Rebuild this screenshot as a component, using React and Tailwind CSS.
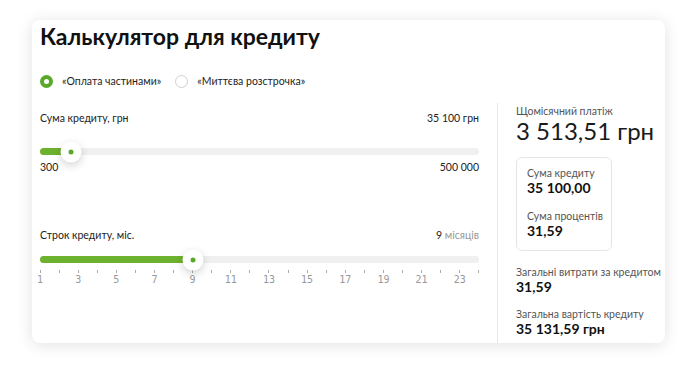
import React from "react";

const font = { fontFamily: "Lato, 'Noto Sans', sans-serif" };

function Radio({ checked, label }) {
  return (
    <div className="flex items-center">
      {checked ? (
        <span className="flex h-[13px] w-[13px] items-center justify-center rounded-full bg-[#5aa82a]">
          <span className="h-[5px] w-[5px] rounded-full bg-white"></span>
        </span>
      ) : (
        <span className="h-[13px] w-[13px] rounded-full border border-[#d0d0d0] bg-white"></span>
      )}
      <span className="ml-[9px] text-[10.5px] leading-[14px] text-[#1d1d1d]">{label}</span>
    </div>
  );
}

function Slider({ percent }) {
  return (
    <div className="relative h-[7px] w-full rounded-full bg-[#f0f0f0]">
      <div className="h-[7px] rounded-full bg-[#6db22e]" style={{ width: percent + "%" }}></div>
      <div
        className="absolute top-1/2 flex h-[21px] w-[21px] -translate-x-1/2 -translate-y-1/2 items-center justify-center rounded-full bg-white shadow-[0_3px_8px_rgba(0,0,0,0.18)]"
        style={{ left: percent + "%" }}
      >
        <span className="h-[5px] w-[5px] rounded-full bg-[#5aa82a]"></span>
      </div>
    </div>
  );
}

export default function App() {
  const months = Array.from({ length: 24 }, (_, i) => i + 1);
  const sumPercent = ((35100 - 300) / (500000 - 300)) * 100;
  const termPercent = (8 / 23) * 100;

  return (
    <div className="min-h-screen bg-white pl-8 pt-5" style={font}>
      <div className="flex h-[323px] w-[633px] flex-col overflow-hidden rounded-lg bg-white shadow-[0_2px_16px_rgba(0,0,0,0.12)]">
        {/* title */}
        <h1 className="h-8 px-2 text-[23px] font-bold leading-8 text-[#111]">Калькулятор для кредиту</h1>

        {/* radio */}
        <div className="mt-[22px] flex items-center gap-[14px] px-2">
          <Radio checked label="«Оплата частинами»" />
          <Radio label="«Миттєва розстрочка»" />
        </div>

        <div className="mt-[15px] flex flex-1">
          {/* left */}
          <div className="w-[465px] pl-2 pr-[18px] pt-2">
            <div className="flex justify-between text-[10.5px] leading-[14px] text-[#222]">
              <span>Сума кредиту, грн</span>
              <span>35 100 грн</span>
            </div>
            <div className="mt-[23px]">
              <Slider percent={sumPercent} />
            </div>
            <div className="mt-[5px] flex justify-between text-[10.5px] leading-[14px] text-[#222]">
              <span>300</span>
              <span>500 000</span>
            </div>

            <div className="mt-[54px] flex justify-between text-[10.5px] leading-[14px] text-[#222]">
              <span>Строк кредиту, міс.</span>
              <span>
                9 <span className="text-[#999]">місяців</span>
              </span>
            </div>
            <div className="mt-[14px]">
              <Slider percent={termPercent} />
            </div>
            <div className="mt-[7px] flex justify-between">
              {months.map((m) => (
                <div key={m} className="flex w-0 flex-col items-center">
                  <div className="h-[3px] w-px bg-[#aaa]"></div>
                  {m % 2 === 1 && (
                    <span className="mt-[1px] text-[10px] leading-[12px] text-[#999]" style={{ fontFamily: "'DejaVu Sans Mono', monospace" }}>
                      {m}
                    </span>
                  )}
                </div>
              ))}
            </div>
          </div>

          {/* right */}
          <div className="flex-1 whitespace-nowrap border-l border-[#e8e8e8] pl-[18px] pt-[1px]">
            <div className="text-[10.5px] leading-[14px] text-[#555]">Щомісячний платіж</div>
            <div className="text-[24px] leading-[26px] text-[#1a1a1a]">3 513,51 грн</div>

            <div className="mt-[13px] w-[96px] rounded-md border border-[#e5e5e5] pb-[11px] pl-[10px] pt-2">
              <div className="text-[10.5px] leading-[14px] text-[#555]">Сума кредиту</div>
              <div className="text-[14px] font-bold leading-4 text-[#111]">35 100,00</div>
              <div className="mt-[13px] text-[10.5px] leading-[14px] text-[#555]">Сума процентів</div>
              <div className="text-[14px] font-bold leading-4 text-[#111]">31,59</div>
            </div>

            <div className="mt-[14px] text-[10.5px] leading-[14px] text-[#555]">Загальні витрати за кредитом</div>
            <div className="text-[14px] font-bold leading-4 text-[#111]">31,59</div>
            <div className="mt-[12px] text-[10.5px] leading-[14px] text-[#555]">Загальна вартість кредиту</div>
            <div className="text-[14px] font-bold leading-4 text-[#111]">35 131,59 грн</div>
          </div>
        </div>
      </div>
    </div>
  );
}
